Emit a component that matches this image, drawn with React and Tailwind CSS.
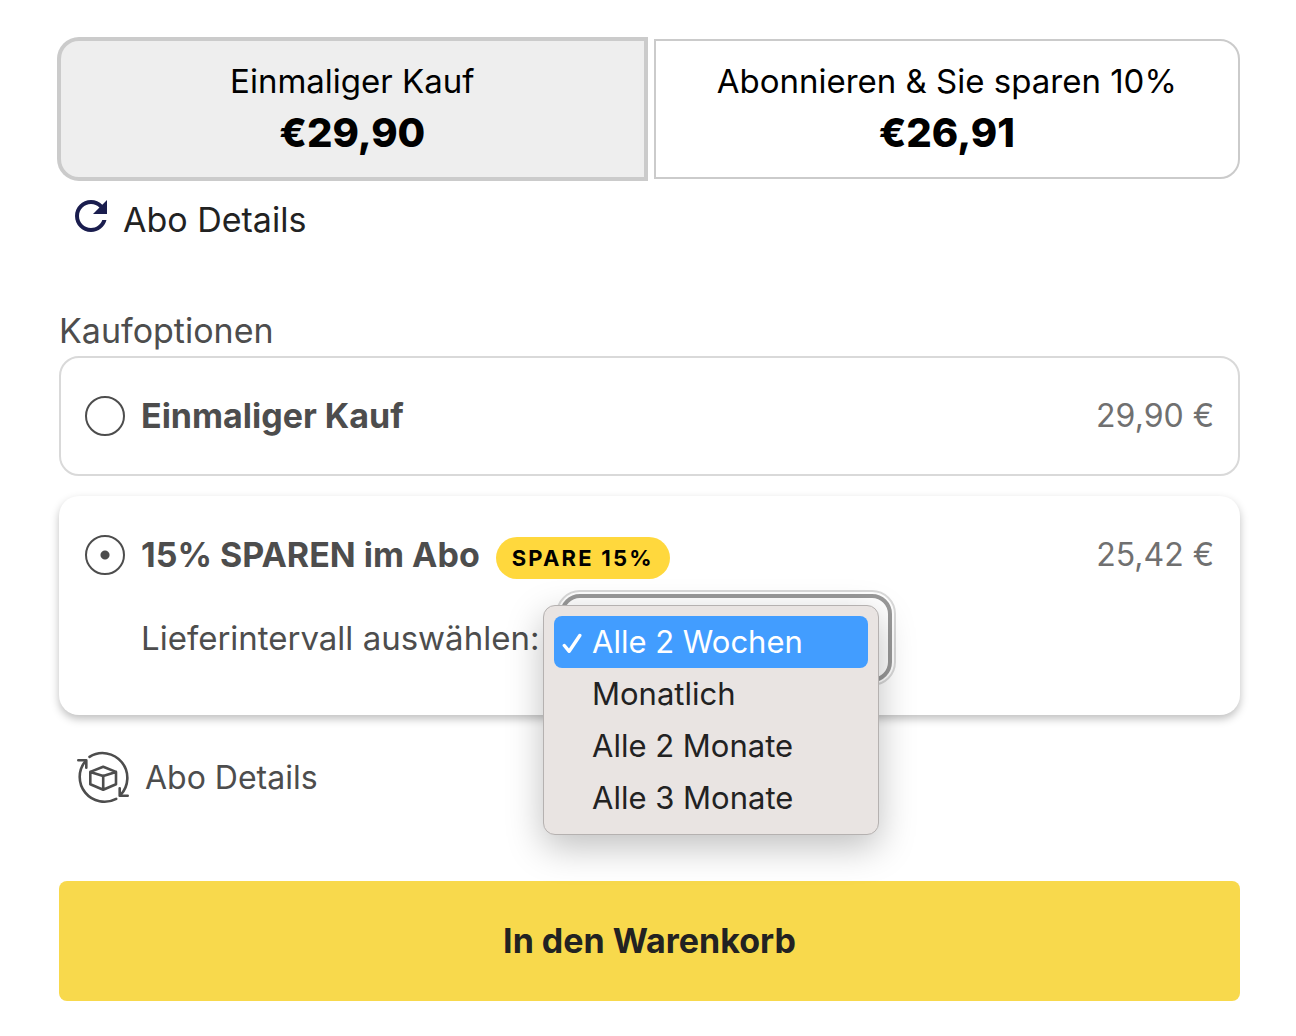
import { useState } from "react";

const intervals = [
  "Alle 2 Wochen",
  "Monatlich",
  "Alle 2 Monate",
  "Alle 3 Monate",
];

export default function App() {
  const [mode, setMode] = useState("once");
  const [plan, setPlan] = useState("abo");

  return (
    <main className="min-h-screen w-full bg-white pt-[39px] pr-14 pb-9 pl-[59px] font-['Inter',sans-serif] text-[34px] leading-10 text-[#4d4d4d]">
      <div className="grid grid-cols-2 gap-2">
        <ModeButton
          title="Einmaliger Kauf"
          price="€29,90"
          side="rounded-l-[20px]"
          active={mode === "once"}
          onClick={() => setMode("once")}
        />
        <ModeButton
          title="Abonnieren & Sie sparen 10%"
          price="€26,91"
          side="rounded-r-[20px]"
          active={mode === "sub"}
          onClick={() => setMode("sub")}
        />
      </div>

      <a href="#abo" className="mt-[21px] flex items-start gap-4 pl-4 text-[#222]">
        <RefreshIcon />
        <span>Abo Details</span>
      </a>

      <fieldset className="mt-[71px]">
        <legend className="mb-[5px]">Kaufoptionen</legend>

        <div className="flex h-[120px] items-center gap-4 rounded-[20px] border-2 border-[#d9d9d9] px-6">
          <Radio
            id="plan-once"
            checked={plan === "once"}
            onChange={() => setPlan("once")}
          />
          <label htmlFor="plan-once" className="font-bold">
            Einmaliger Kauf
          </label>
          <span className="ml-auto text-[32px] text-[#707070]">29,90 €</span>
        </div>

        <div className="mt-5 h-[219px] rounded-[20px] px-[26px] pt-[39px] shadow-[0_4px_8px_rgba(0,0,0,0.25)]">
          <div className="flex h-10 items-center">
            <Radio
              id="plan-abo"
              checked={plan === "abo"}
              onChange={() => setPlan("abo")}
            />
            <label htmlFor="plan-abo" className="ml-4 font-bold">
              15% SPAREN im Abo
            </label>
            <span className="mt-1.5 ml-4 flex h-[42px] items-center rounded-full bg-[#ffd83d] px-4 text-[22px] font-bold tracking-widest text-black">
              SPARE 15%
            </span>
            <span className="ml-auto text-[32px] text-[#707070]">25,42 €</span>
          </div>

          <div className="mt-[19px] flex items-center pl-14">
            <label
              htmlFor="interval"
              className="w-[419px] text-[33px] whitespace-nowrap"
            >
              Lieferintervall auswählen:
            </label>
            <IntervalSelect />
          </div>
        </div>
      </fieldset>

      <a
        href="#abo"
        className="mt-9 flex items-center gap-[15px] pl-[17px] text-[32px]"
      >
        <BoxCycleIcon />
        <span>Abo Details</span>
      </a>

      <button
        type="button"
        className="mt-[76px] h-[120px] w-full rounded-lg bg-[#f8d94c] font-bold text-[#222]"
      >
        In den Warenkorb
      </button>
    </main>
  );
}

const ModeButton = ({ title, price, side, active, onClick }) => {
  return (
    <button
      type="button"
      aria-pressed={active}
      onClick={onClick}
      className={`${side} flex h-[140px] flex-col items-center border-2 border-[#cbcbcb] pt-5 text-black ${
        active ? "bg-[#eee] ring-2 ring-[#cbcbcb]" : "bg-white"
      }`}
    >
      <span className="text-[33px]">{title}</span>
      <span className="mt-2 text-[40px] leading-[48px] font-extrabold">
        {price}
      </span>
    </button>
  );
};

const Radio = ({ id, checked, onChange }) => {
  return (
    <input
      type="radio"
      name="plan"
      id={id}
      checked={checked}
      onChange={onChange}
      className="size-10 shrink-0 appearance-none rounded-full border-2 border-[#4d4d4d] checked:bg-[radial-gradient(circle,#4d4d4d_4px,transparent_5px)]"
    />
  );
};

const IntervalSelect = () => {
  const [value, setValue] = useState(intervals[0]);

  return (
    <div className="relative">
      <select
        id="interval"
        value={value}
        onChange={(e) => setValue(e.target.value)}
        className="block h-[88px] w-[332px] appearance-none rounded-[20px] border-4 border-[#999] bg-white px-6 outline-2 outline-offset-2 outline-[#d9d9d9]"
      >
        {intervals.map((item) => (
          <option key={item}>{item}</option>
        ))}
      </select>

      {/* open menu */}
      <ul
        role="listbox"
        aria-label="Lieferintervall"
        className="absolute top-[11px] -left-[17px] w-[336px] rounded-xl border border-[#b5b1b0] bg-[#e9e4e2] p-2.5 text-[31px] text-[#222] shadow-[0_12px_36px_rgba(0,0,0,0.25)]"
      >
        {intervals.map((item) => (
          <li
            key={item}
            role="option"
            aria-selected={item === value}
            onClick={() => setValue(item)}
            className={`flex h-[52px] items-center rounded-lg pl-2 whitespace-nowrap ${
              item === value ? "bg-[#429dff] text-white" : ""
            }`}
          >
            <span className="w-[30px]">{item === value && <CheckIcon />}</span>
            {item}
          </li>
        ))}
      </ul>
    </div>
  );
};

const CheckIcon = () => (
  <svg width="20" height="24" viewBox="0 0 20 24" fill="none" aria-hidden="true">
    <path
      d="M2.3 15.5 7.2 21.3 17.8 5.5"
      stroke="currentColor"
      strokeWidth="3.4"
      strokeLinecap="round"
      strokeLinejoin="round"
    />
  </svg>
);

const RefreshIcon = () => (
  <svg width="32" height="32" viewBox="4 4 16 16" fill="#1a1d4e" aria-hidden="true">
    <path d="M17.65 6.35C16.2 4.9 14.21 4 12 4c-4.42 0-7.99 3.58-7.99 8s3.57 8 7.99 8c3.73 0 6.84-2.55 7.73-6h-2.08c-.82 2.33-3.04 4-5.65 4-3.31 0-6-2.69-6-6s2.69-6 6-6c1.66 0 3.14.69 4.22 1.78L13 11h7V4l-2.35 2.35z" />
  </svg>
);

const BoxCycleIcon = () => (
  <svg
    width="54"
    height="54"
    viewBox="0 0 54 54"
    fill="none"
    stroke="#4d4d4d"
    strokeWidth="2.6"
    strokeLinecap="round"
    strokeLinejoin="round"
    aria-hidden="true"
  >
    <path d="M13.5 5.8A24.8 24.8 0 0 1 44.5 44" />
    <path d="M40.2 47.8A24.8 24.8 0 0 1 9.5 10" />
    <path d="M2.3 9.3h8v7.4M51.7 44.7h-8v-7.4" />
    <path d="M27.2 15.7 14.3 20.9v12.4l12.9 5.4 12.8-5.4V20.9zM14.3 20.9l12.9 4 12.8-4M27.2 24.9v13.8" />
  </svg>
);
